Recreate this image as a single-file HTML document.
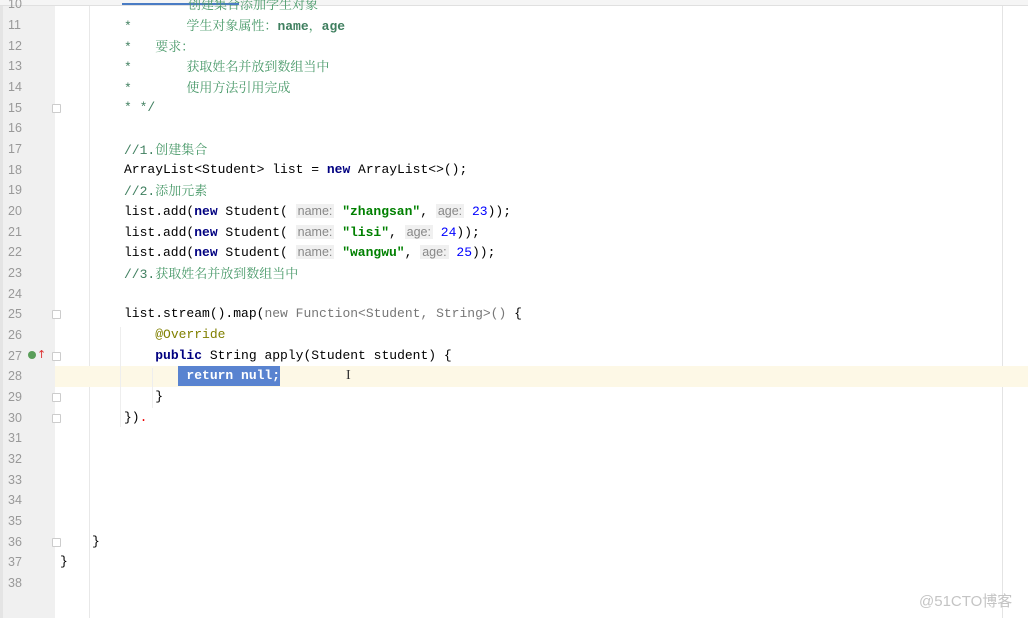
<!DOCTYPE html>
<html><head><meta charset="utf-8"><style>
body{margin:0;width:1028px;height:618px;overflow:hidden;background:#fff;position:relative;font-family:"Liberation Mono","Noto Sans CJK SC",monospace;font-size:13px;}
.g{position:absolute;left:3px;top:0;width:52px;height:618px;background:#f0f0f0;}
.edge{position:absolute;left:0;top:0;width:3px;height:618px;background:#e4e4e4;}
.l{position:absolute;left:0;height:20px;line-height:20px;white-space:pre;}
.n{position:absolute;left:8px;width:18px;text-align:left;color:#999;font-family:"Liberation Sans",sans-serif;font-size:12.5px;}
.c{position:absolute;left:124px;color:#000;}
.cm{color:#629755;color:#3f7f5f;}
.cj{color:#4a9a6a;font-family:"Noto Serif CJK SC","Noto Sans CJK SC",serif;}
.k{color:#000080;font-weight:bold;}
.s{color:#067d17;font-weight:bold;color:#008000;}
.num{color:#0000ff;}
.h{color:#888;background:#f0f0f0;font-family:"Liberation Sans",sans-serif;font-size:12.5px;padding:0 2px;}
.gr{color:#777;}
.an{color:#808000;}
.fold{position:absolute;left:52px;width:7px;height:7px;border:1px solid #ccc;background:#fff;border-radius:1px;}
</style></head><body>
<div class="edge"></div><div class="g"></div>
<div style="position:absolute;left:0;top:0;width:1028px;height:5px;background:#f5f5f5;border-bottom:1px solid #e0e0e0"></div>
<div style="position:absolute;left:122px;top:3px;width:117px;height:2px;background:#4a7cc4"></div>
<div style="position:absolute;left:89px;top:6px;width:1px;height:612px;background:#e8e8e8"></div>
<div style="position:absolute;left:1002px;top:6px;width:1px;height:612px;background:#e4e4e4"></div>
<div style="position:absolute;left:55px;top:366px;width:973px;height:21px;background:#fdf8e6"></div>
<div style="position:absolute;left:120px;top:327px;width:1px;height:100px;background:#eee"></div>
<div style="position:absolute;left:152px;top:368px;width:1px;height:40px;background:#eee"></div>
<div style="position:absolute;left:178px;top:366px;width:102px;height:20px;background:#2f65ca;opacity:.8"></div>

<div class="l" style="top:-6px"><span class="n">10</span><span class="c"><span class="cj" style="margin-left:64px">创建集合添加学生对象</span></span></div>
<div class="l" style="top:15px"><span class="n">11</span><span class="c cm">*       <span class="cj">学生对象属性：</span><b>name</b><span class="cj">，</span><b>age</b></span></div>
<div class="l" style="top:36px"><span class="n">12</span><span class="c cm">*   <span class="cj">要求：</span></span></div>
<div class="l" style="top:56px"><span class="n">13</span><span class="c cm">*       <span class="cj">获取姓名并放到数组当中</span></span></div>
<div class="l" style="top:77px"><span class="n">14</span><span class="c cm">*       <span class="cj">使用方法引用完成</span></span></div>
<div class="l" style="top:98px"><span class="n">15</span><span class="c cm">* */</span></div>
<div class="l" style="top:118px"><span class="n">16</span></div>
<div class="l" style="top:139px"><span class="n">17</span><span class="c cm">//1.<span class="cj">创建集合</span></span></div>
<div class="l" style="top:160px"><span class="n">18</span><span class="c">ArrayList&lt;Student&gt; list = <span class="k">new</span> ArrayList&lt;&gt;();</span></div>
<div class="l" style="top:180px"><span class="n">19</span><span class="c cm">//2.<span class="cj">添加元素</span></span></div>
<div class="l" style="top:201px"><span class="n">20</span><span class="c">list.add(<span class="k">new</span> Student( <span class="h">name:</span> <span class="s">"zhangsan"</span>, <span class="h">age:</span> <span class="num">23</span>));</span></div>
<div class="l" style="top:222px"><span class="n">21</span><span class="c">list.add(<span class="k">new</span> Student( <span class="h">name:</span> <span class="s">"lisi"</span>, <span class="h">age:</span> <span class="num">24</span>));</span></div>
<div class="l" style="top:242px"><span class="n">22</span><span class="c">list.add(<span class="k">new</span> Student( <span class="h">name:</span> <span class="s">"wangwu"</span>, <span class="h">age:</span> <span class="num">25</span>));</span></div>
<div class="l" style="top:263px"><span class="n">23</span><span class="c cm">//3.<span class="cj">获取姓名并放到数组当中</span></span></div>
<div class="l" style="top:284px"><span class="n">24</span></div>
<div class="l" style="top:304px"><span class="n">25</span><span class="c">list.stream().map(<span class="gr">new Function&lt;Student, String&gt;()</span> {</span></div>
<div class="l" style="top:325px"><span class="n">26</span><span class="c">    <span class="an">@Override</span></span></div>
<div class="l" style="top:346px"><span class="n">27</span><span class="c">    <span class="k">public</span> String apply(Student student) {</span></div>
<div class="l" style="top:366px"><span class="n">28</span><span class="c">        <span class="k" style="color:#fff">return null;</span></span></div>
<div class="l" style="top:387px"><span class="n">29</span><span class="c">    }</span></div>
<div class="l" style="top:408px"><span class="n">30</span><span class="c">})<span style="color:#e00">.</span></span></div>
<div class="l" style="top:428px"><span class="n">31</span></div>
<div class="l" style="top:449px"><span class="n">32</span></div>
<div class="l" style="top:470px"><span class="n">33</span></div>
<div class="l" style="top:490px"><span class="n">34</span></div>
<div class="l" style="top:511px"><span class="n">35</span></div>
<div class="l" style="top:532px"><span class="n">36</span><span class="c" style="left:92px">}</span></div>
<div class="l" style="top:552px"><span class="n">37</span><span class="c" style="left:60px">}</span></div>
<div class="l" style="top:573px"><span class="n">38</span></div>

<div class="fold" style="top:104px"></div>
<div class="fold" style="top:310px"></div>
<div class="fold" style="top:352px"></div>
<div class="fold" style="top:393px"></div>
<div class="fold" style="top:414px"></div>
<div class="fold" style="top:538px"></div>
<div style="position:absolute;left:28px;top:351px;width:8px;height:8px;border-radius:50%;background:#5a9e5a"></div>
<div style="position:absolute;left:37px;top:349px;color:#d33;font-size:11px;line-height:11px;font-family:'DejaVu Sans',sans-serif">↑</div>
<div style="position:absolute;left:346px;top:368px;color:#333;font-size:14px;font-family:'Liberation Serif',serif">I</div>
<div style="position:absolute;left:919px;top:590px;color:#c4c4c4;font-family:'Liberation Sans','Noto Sans CJK SC',sans-serif;font-size:15px">@51CTO博客</div>
</body></html>
